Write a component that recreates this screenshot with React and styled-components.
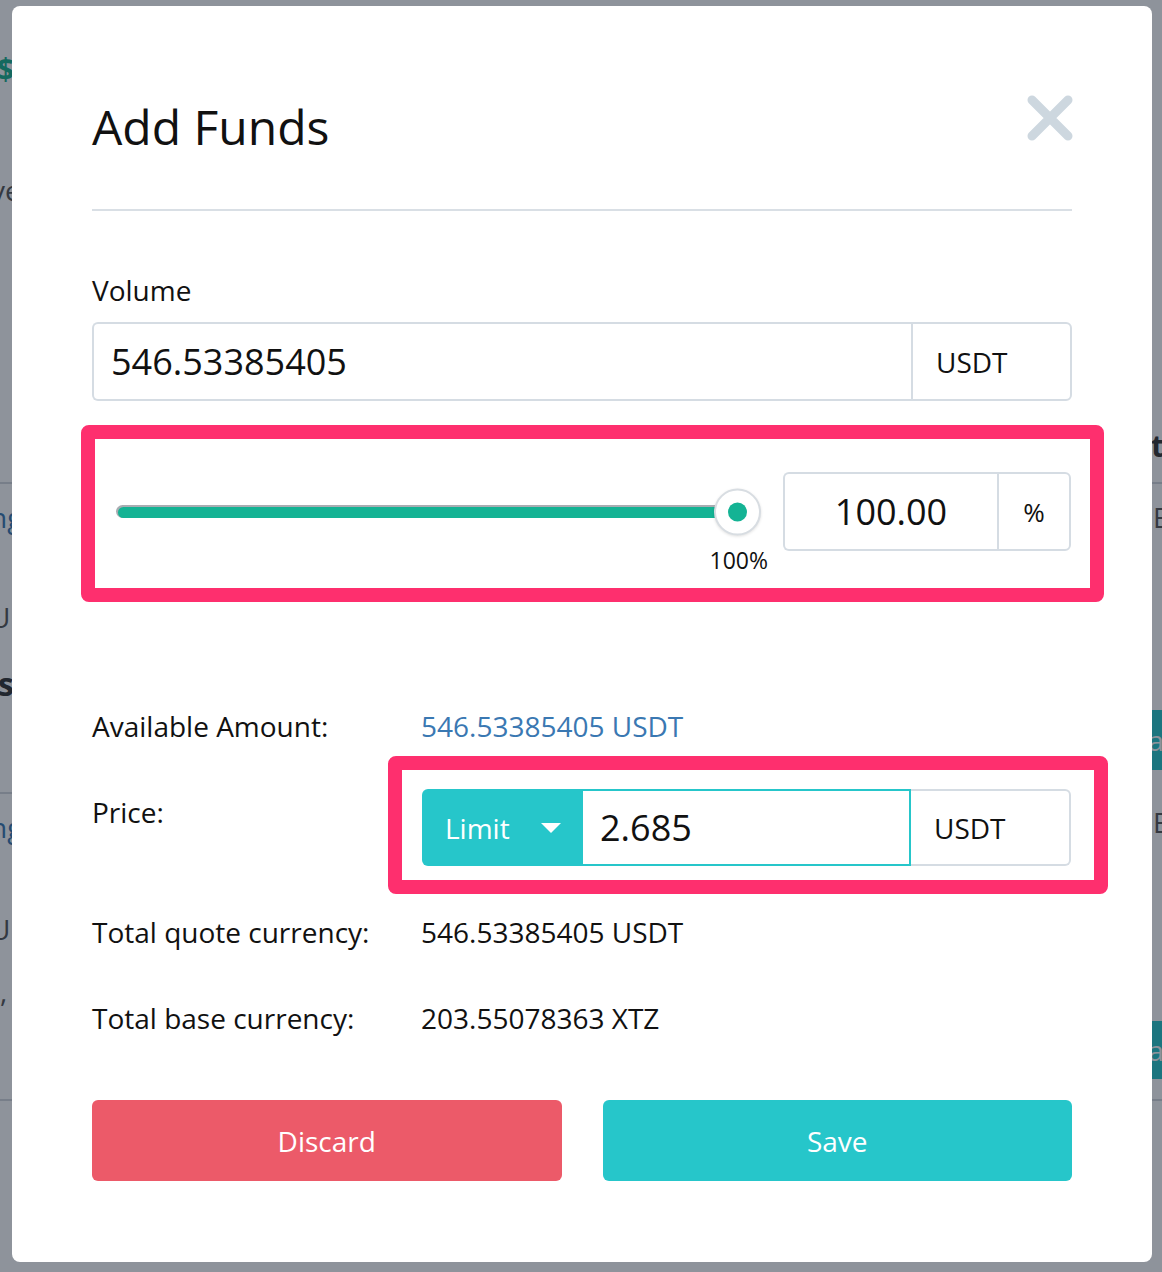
import React from 'react'
import styled, { createGlobalStyle } from 'styled-components'

const GlobalStyle = createGlobalStyle`
  body {
    margin: 0;
    font-family: "Open Sans", "Noto Sans", sans-serif;
  }
`

const Page = styled.div`
  position: relative;
  width: 1162px;
  height: 1272px;
  overflow: hidden;
  background: #fff;
  display: flex;
  justify-content: space-between;
`

const Strip = styled.div`
  display: flex;
  flex-direction: column;
  width: 60px;
`

const Slot = styled.div`
  height: ${p => p.$h}px;
  display: flex;
  align-items: center;
  padding-left: ${p => p.$pad || 0}px;
  margin-left: ${p => p.$shift || 0}px;
  font-size: ${p => p.$size || 28}px;
  font-weight: ${p => (p.$bold ? 700 : 400)};
  color: ${p => p.$color || '#555'};
  white-space: nowrap;
  background: ${p => p.$bg || 'transparent'};
`

const Overlay = styled.div`
  position: absolute;
  inset: 0;
  background: rgba(15, 25, 42, 0.47);
`

const Modal = styled.div`
  position: absolute;
  top: 6px;
  left: 12px;
  width: 1140px;
  height: 1256px;
  box-sizing: border-box;
  background: #fff;
  border-radius: 8px;
  padding: 0 80px;
  display: flex;
  flex-direction: column;
  color: #111;
`

const Header = styled.div`
  display: flex;
  justify-content: space-between;
  align-items: flex-start;
  padding: 89px 0 50px;
  border-bottom: 2px solid #d9dfe5;
`

const Title = styled.h1`
  margin: 0;
  font-size: 48px;
  line-height: 64px;
  font-weight: 400;
`

const CloseButton = styled.button`
  border: none;
  background: none;
  padding: 0;
  margin: -1px -2px 0 0;
  width: 48px;
  height: 48px;
  cursor: pointer;
`

const FieldLabel = styled.div`
  margin-top: 61px;
  font-size: 28px;
  line-height: 36px;
`

const InputGroup = styled.div`
  display: flex;
  height: ${p => p.$h || 79}px;
  margin-top: ${p => p.$mt || 0}px;
  width: ${p => p.$w || 'auto'};
  box-sizing: border-box;
`

const Field = styled.div`
  flex: 1;
  display: flex;
  align-items: center;
  justify-content: ${p => (p.$center ? 'center' : 'flex-start')};
  padding-left: ${p => (p.$center ? 0 : 17)}px;
  font-size: 36px;
  border: 2px solid ${p => (p.$active ? '#26c6ca' : '#d5dce3')};
  border-right: ${p => (p.$active ? '2px solid #26c6ca' : 'none')};
  border-radius: ${p => (p.$first ? '6px 0 0 6px' : '0')};
`

const Addon = styled.div`
  width: ${p => p.$w}px;
  box-sizing: border-box;
  display: flex;
  align-items: center;
  justify-content: ${p => (p.$center ? 'center' : 'flex-start')};
  padding-left: ${p => (p.$center ? 0 : 23)}px;
  font-size: ${p => p.$size || 28}px;
  border: 2px solid #d5dce3;
  border-left: ${p => (p.$noLeft ? 'none' : '2px solid #d5dce3')};
  border-radius: 0 6px 6px 0;
`

const Highlight = styled.div`
  border: 14px solid #fe2f6e;
  border-radius: 8px;
  margin: ${p => p.$margin};
  padding: ${p => p.$pad};
`

const SliderRow = styled.div`
  display: flex;
  align-items: center;
`

const SliderWrap = styled.div`
  position: relative;
  flex: 1;
  height: 79px;
  margin-right: 22px;
  display: flex;
  align-items: center;
`

const Track = styled.div`
  flex: 1;
  margin-right: 23px;
  height: 13px;
  border-radius: 7px;
  background: #a9adb2;
  display: flex;
  align-items: flex-end;
`

const Fill = styled.div`
  width: 100%;
  height: 11px;
  margin-left: 2px;
  border-radius: 6px;
  background: #14b394;
`

const Thumb = styled.div`
  position: absolute;
  right: 0;
  top: 50%;
  transform: translateY(-50%);
  width: 47px;
  height: 47px;
  box-sizing: border-box;
  border-radius: 50%;
  border: 2px solid #d8dde2;
  background: #fff;
  box-shadow: 0 1px 3px rgba(0, 0, 0, 0.12);
  display: flex;
  align-items: center;
  justify-content: center;

  &::after {
    content: '';
    width: 19px;
    height: 19px;
    border-radius: 50%;
    background: #14b394;
  }
`

const ThumbLabel = styled.div`
  position: absolute;
  right: -7px;
  top: 73px;
  font-size: 23px;
  line-height: 30px;
`

const InfoRow = styled.div`
  display: grid;
  grid-template-columns: 329px 1fr;
  align-items: start;
  margin-top: ${p => p.$mt}px;
  font-size: 28px;
  line-height: 36px;
`

const InfoLabel = styled.div`
  padding-top: ${p => p.$pt || 0}px;
`

const InfoValue = styled.div`
  color: ${p => (p.$link ? '#3a78b2' : '#111')};
`

const LimitButton = styled.div`
  width: 159px;
  box-sizing: border-box;
  display: flex;
  align-items: center;
  justify-content: space-between;
  padding: 0 20px 0 23px;
  background: #26c6ca;
  color: #fff;
  font-size: 28px;
  border-radius: 6px 0 0 6px;

  &::after {
    content: '';
    border-left: 10px solid transparent;
    border-right: 10px solid transparent;
    border-top: 10px solid #fff;
  }
`

const Actions = styled.div`
  display: grid;
  grid-template-columns: 1fr 1fr;
  gap: 41px;
  margin-top: 64px;
`

const ActionButton = styled.button`
  height: 81px;
  border: none;
  border-radius: 6px;
  background: ${p => (p.$danger ? '#ec5a69' : '#26c6ca')};
  color: #fff;
  font-family: inherit;
  font-size: 28px;
  cursor: pointer;
`

const leftStrip = [
  { h: 48 },
  { h: 40, text: '$', color: '#1bb08e', bold: true, size: 30, shift: -3 },
  { h: 84 },
  { h: 36, text: 've', shift: -9 },
  { h: 274 },
  { h: 2, bg: '#d3d8de' },
  { h: 16 },
  { h: 34, text: 'ng', color: '#3a78b2', shift: -10 },
  { h: 66 },
  { h: 34, text: 'U', shift: -10 },
  { h: 30 },
  { h: 38, text: 's', bold: true, color: '#333', size: 32, shift: -2 },
  { h: 90 },
  { h: 2, bg: '#d3d8de' },
  { h: 16 },
  { h: 34, text: 'ng', color: '#3a78b2', shift: -10 },
  { h: 68 },
  { h: 34, text: 'U', shift: -10 },
  { h: 30 },
  { h: 30, text: ',', shift: 0 },
  { h: 93 },
  { h: 2, bg: '#d3d8de' }
]

const rightStrip = [
  { h: 428 },
  { h: 34, text: 'st', bold: true, color: '#333', size: 30, pad: 34 },
  { h: 20 },
  { h: 2, bg: '#d3d8de' },
  { h: 16 },
  { h: 34, text: 'Bo', pad: 51 },
  { h: 176 },
  { h: 60, text: 'Sa', color: '#fff', bg: '#26c6ca', pad: 31 },
  { h: 35 },
  { h: 34, text: 'Bo', pad: 51 },
  { h: 182 },
  { h: 58, text: 'Sa', color: '#fff', bg: '#26c6ca', pad: 31 },
  { h: 20 },
  { h: 2, bg: '#d3d8de' }
]

function renderStrip (items) {
  return items.map((s, i) => (
    <Slot
      key={i}
      $h={s.h}
      $bg={s.bg}
      $color={s.color}
      $bold={s.bold}
      $size={s.size}
      $shift={s.shift}
      $pad={s.pad}
    >
      {s.text}
    </Slot>
  ))
}

function CloseIcon () {
  return (
    <svg width='48' height='48' viewBox='0 0 48 48'>
      <path
        d='M6 6 L42 42 M42 6 L6 42'
        stroke='#cdd7df'
        strokeWidth='9'
        strokeLinecap='round'
        fill='none'
      />
    </svg>
  )
}

function App () {
  return (
    <>
      <GlobalStyle />
      <Page>
        <Strip>{renderStrip(leftStrip)}</Strip>
        <Strip>{renderStrip(rightStrip)}</Strip>
        <Overlay />
        <Modal>
          <Header>
            <Title>Add Funds</Title>
            <CloseButton aria-label='Close'>
              <CloseIcon />
            </CloseButton>
          </Header>

          <FieldLabel>Volume</FieldLabel>
          <InputGroup $mt={14}>
            <Field $first>546.53385405</Field>
            <Addon $w={161}>USDT</Addon>
          </InputGroup>

          <Highlight $margin='24px -32px 0 -11px' $pad='33px 19px 37px 21px'>
            <SliderRow>
              <SliderWrap>
                <Track>
                  <Fill />
                </Track>
                <Thumb />
                <ThumbLabel>100%</ThumbLabel>
              </SliderWrap>
              <InputGroup $w='288px'>
                <Field $first $center>100.00</Field>
                <Addon $w={74} $center $size={26}>%</Addon>
              </InputGroup>
            </SliderRow>
          </Highlight>

          <InfoRow $mt={106}>
            <InfoLabel>Available Amount:</InfoLabel>
            <InfoValue $link>546.53385405 USDT</InfoValue>
          </InfoRow>

          <InfoRow $mt={12}>
            <InfoLabel $pt={38}>Price:</InfoLabel>
            <Highlight $margin='0 -36px 0 -33px' $pad='19px 23px 14px 20px'>
              <InputGroup $h={77}>
                <LimitButton>Limit</LimitButton>
                <Field $active>2.685</Field>
                <Addon $w={160} $noLeft>USDT</Addon>
              </InputGroup>
            </Highlight>
          </InfoRow>

          <InfoRow $mt={20}>
            <InfoLabel>Total quote currency:</InfoLabel>
            <InfoValue>546.53385405 USDT</InfoValue>
          </InfoRow>

          <InfoRow $mt={50}>
            <InfoLabel>Total base currency:</InfoLabel>
            <InfoValue>203.55078363 XTZ</InfoValue>
          </InfoRow>

          <Actions>
            <ActionButton $danger>Discard</ActionButton>
            <ActionButton>Save</ActionButton>
          </Actions>
        </Modal>
      </Page>
    </>
  )
}

export default App
